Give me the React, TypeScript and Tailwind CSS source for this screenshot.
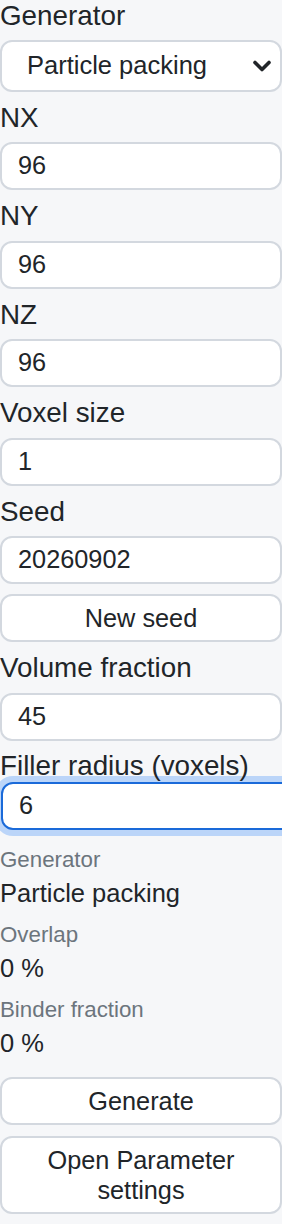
const font = { fontFamily: '"Liberation Sans", Arial, sans-serif' };

function FieldLabel({ children, className = '' }: { children: string; className?: string }) {
	return (
		<div className={`text-[27.8px] leading-[32.5px] text-[#212529] whitespace-nowrap ${className}`}>
			{children}
		</div>
	);
}

function TextInput({ value }: { value: string }) {
	return (
		<div className="h-[48px] w-full shrink-0 rounded-[12px] border-2 border-[#d3d8df] bg-white px-[16px] flex items-center text-[25.3px] text-[#212529]">
			{value}
		</div>
	);
}

function FormButton({ children, className = '' }: { children: React.ReactNode; className?: string }) {
	return (
		<button
			type="button"
			className={`w-full rounded-[12px] border-2 border-[#d3d8df] bg-white text-center text-[25.3px] leading-[30px] text-[#212529] ${className}`}
		>
			{children}
		</button>
	);
}

function Field({ label, value }: { label: string; value: string }) {
	return (
		<>
			<FieldLabel className="mt-[10px] mb-[8px]">{label}</FieldLabel>
			<TextInput value={value} />
		</>
	);
}

function Stat({ label, value, first }: { label: string; value: string; first?: boolean }) {
	return (
		<div className={first ? 'mt-[18px]' : 'mt-[15px]'}>
			<div className="text-[22.3px] leading-[24px] text-[#6c757d]">{label}</div>
			<div className="mt-[6px] text-[25.5px] leading-[30px] text-[#212529]">{value}</div>
		</div>
	);
}

export default function App() {
	return (
		<div className="min-h-[1224px] w-[282px] overflow-hidden bg-[#f6f7f9]" style={font}>
			<div className="flex flex-col">
				<FieldLabel className="mb-[7px]">Generator</FieldLabel>
				<div className="h-[52px] rounded-[12px] border-2 border-[#d3d8df] bg-white pl-[25px] pr-[8px] flex items-center text-[25.5px] text-[#212529]">
					<span className="flex-1">Particle packing</span>
					<svg width="20" height="14" viewBox="0 0 20 14" className="text-[#212529]">
						<path d="M3 3.5l7 7 7-7" fill="none" stroke="currentColor" strokeWidth="3.6" strokeLinecap="round" strokeLinejoin="round" />
					</svg>
				</div>

				<Field label="NX" value="96" />
				<Field label="NY" value="96" />
				<Field label="NZ" value="96" />
				<Field label="Voxel size" value="1" />
				<Field label="Seed" value="20260902" />

				<FormButton className="mt-[10px] h-[48px]">New seed</FormButton>

				<Field label="Volume fraction" value="45" />

				<FieldLabel className="mt-[9px] relative z-10">Filler radius (voxels)</FieldLabel>
				<div className="h-[48px] w-[calc(100%+24px)] ml-[1px] shrink-0 rounded-[12px] border-2 border-[#1a6ad9] bg-white px-[16px] flex items-center text-[25.3px] text-[#212529] shadow-[0_0_0_6px_rgba(13,110,253,0.25)]">
					6
				</div>

				<Stat first label="Generator" value="Particle packing" />
				<Stat label="Overlap" value="0 %" />
				<Stat label="Binder fraction" value="0 %" />

				<FormButton className="mt-[19px] h-[48px]">Generate</FormButton>
				<FormButton className="mt-[11px] h-[78px] px-[20px]">Open Parameter settings</FormButton>
			</div>
		</div>
	);
}
